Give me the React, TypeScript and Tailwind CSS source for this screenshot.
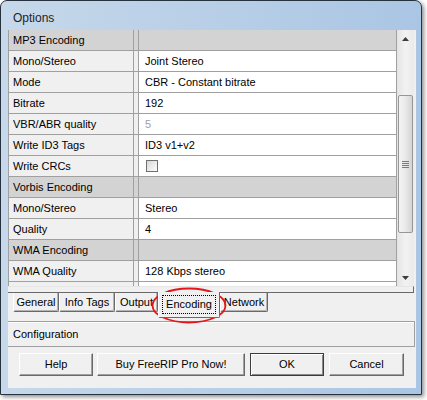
import React from "react";

type Row =
  | { kind: "header"; label: string }
  | { kind: "value"; label: string; value: string; muted?: boolean }
  | { kind: "check"; label: string };

const rows: Row[] = [
  { kind: "header", label: "MP3 Encoding" },
  { kind: "value", label: "Mono/Stereo", value: "Joint Stereo" },
  { kind: "value", label: "Mode", value: "CBR - Constant bitrate" },
  { kind: "value", label: "Bitrate", value: "192" },
  { kind: "value", label: "VBR/ABR quality", value: "5", muted: true },
  { kind: "value", label: "Write ID3 Tags", value: "ID3 v1+v2" },
  { kind: "check", label: "Write CRCs" },
  { kind: "header", label: "Vorbis Encoding" },
  { kind: "value", label: "Mono/Stereo", value: "Stereo" },
  { kind: "value", label: "Quality", value: "4" },
  { kind: "header", label: "WMA Encoding" },
  { kind: "value", label: "WMA Quality", value: "128 Kbps stereo" },
  { kind: "value", label: "", value: "" },
];

const tabs = [
  { label: "General", w: "w-[46px]" },
  { label: "Info Tags", w: "w-[56px]" },
  { label: "Output", w: "w-[43px]" },
  { label: "Encoding", w: "w-[62px]", active: true },
  { label: "Network", w: "w-[48px]" },
];

function GridRow({ row }: { row: Row }) {
  const header = row.kind === "header";
  return (
    <div className="flex h-[21px] shrink-0 border-b border-[#a0a0a0]">
      <div
        className={`w-[124px] flex items-center pl-[4px] ${
          header ? "bg-[#d3d3d3]" : "bg-[#f0f0f0]"
        }`}
      >
        {row.label}
      </div>
      <div
        className={`w-[6px] border-x border-[#a0a0a0] ${
          header ? "bg-[#d3d3d3]" : "bg-[#f0f0f0]"
        }`}
      />
      <div
        className={`flex-1 flex items-center pl-[6px] ${
          header ? "bg-[#d3d3d3]" : "bg-white"
        }`}
      >
        {row.kind === "value" && (
          <span className={row.muted ? "text-[#a0a0a0]" : ""}>{row.value}</span>
        )}
        {row.kind === "check" && (
          <span className="ml-[1px] w-[12px] h-[12px] border border-[#6f6f6f] bg-gradient-to-br from-[#d8d8d8] to-[#fdfdfd]" />
        )}
      </div>
    </div>
  );
}

function Arrow({ up }: { up?: boolean }) {
  return (
    <div className="h-[17px] flex items-center justify-center">
      <svg width="7" height="4" viewBox="0 0 7 4">
        {up ? (
          <polygon points="3.5,0 7,4 0,4" fill="#3c3c3c" />
        ) : (
          <polygon points="0,0 7,0 3.5,4" fill="#3c3c3c" />
        )}
      </svg>
    </div>
  );
}

function Scrollbar() {
  return (
    <div className="w-[17px] h-[256px] flex flex-col bg-gradient-to-r from-[#e4e4e4] via-[#f2f2f2] to-[#eaeaea]">
      <Arrow up />
      <div className="h-[48px]" />
      <div className="mx-[1px] h-[138px] rounded-[2px] border border-[#979797] bg-gradient-to-r from-[#f4f4f4] via-[#e9e9e9] to-[#d4d4d4] flex flex-col items-center justify-center gap-[1px]">
        <span className="w-[7px] h-[1px] bg-[#7c7c7c]" />
        <span className="w-[7px] h-[1px] bg-[#7c7c7c]" />
        <span className="w-[7px] h-[1px] bg-[#7c7c7c]" />
        <span className="w-[7px] h-[1px] bg-[#7c7c7c]" />
      </div>
      <div className="flex-1" />
      <Arrow />
    </div>
  );
}

function Button({
  label,
  w,
  primary,
}: {
  label: string;
  w: string;
  primary?: boolean;
}) {
  return (
    <div
      className={`${w} h-[23px] flex items-center justify-center bg-[#f0f0f0] border ${
        primary
          ? "border-[#3c3c3c] shadow-[inset_1px_1px_0_#fff,inset_-1px_-1px_0_#888]"
          : "border-t-white border-l-white border-r-[#696969] border-b-[#696969] shadow-[inset_-1px_-1px_0_#a0a0a0]"
      }`}
    >
      {label}
    </div>
  );
}

export default function App() {
  return (
    <div className="relative w-[427px] h-[400px] overflow-hidden bg-white text-[11px] text-black font-['Liberation_Sans',Arial,sans-serif]">
      <div className="w-[422px] h-[395px] flex flex-col rounded-t-[7px] border border-[#26333f] bg-[linear-gradient(to_right,#c6d8ea,#aac6e4)] shadow-[2px_2px_4px_rgba(0,0,0,0.45)]">
        <div className="h-[29px] shrink-0 flex items-center pl-[12px] pt-[5px] text-[12px] text-[#1e1e1e]">
          Options
        </div>
        <div className="ml-[7px] mr-[5px] h-[358px] flex flex-col bg-[#f0f0f0]">
          {/* property grid page */}
          <div className="h-[263px] shrink-0 flex flex-col">
            <div className="flex h-[256px]">
              <div className="w-[389px] h-[256px] overflow-hidden flex flex-col border-l border-r border-[#a0a0a0]">
                {rows.map((r, i) => (
                  <GridRow key={i} row={r} />
                ))}
              </div>
              <Scrollbar />
            </div>
            <div className="w-[406px] h-[7px] border-t border-b border-r border-t-[#e6e6e6] border-b-[#696969] border-r-[#696969] bg-[#f0f0f0]" />
          </div>

          {/* tabs */}
          <div className="h-[28px] shrink-0 flex items-start pl-[5px]">
            {tabs.map((t) =>
              t.active ? (
                <div
                  key={t.label}
                  className={`${t.w} relative z-10 -mt-[1px] h-[26px] bg-[#f0f0f0] border-l border-r border-b border-l-white border-r-[#696969] border-b-[#696969] rounded-b-[2px] p-[3px] pt-[3px]`}
                >
                  <div className="h-full border border-dotted border-black flex items-center justify-center">
                    {t.label}
                  </div>
                </div>
              ) : (
                <div
                  key={t.label}
                  className={`${t.w} h-[19px] flex items-center justify-center bg-[#f0f0f0] border-l border-r border-b border-l-white border-r-[#696969] border-b-[#696969] rounded-b-[2px] shadow-[inset_-1px_-1px_0_#b4b4b4]`}
                >
                  {t.label}
                </div>
              )
            )}
          </div>

          {/* configuration panel */}
          <div className="w-[407px] h-[26px] shrink-0 flex items-center pl-[5px] border-t border-b border-r border-t-[#a0a0a0] border-b-[#a0a0a0] border-r-[#a0a0a0] shadow-[inset_0_1px_0_#fff]">
            Configuration
          </div>

          {/* buttons */}
          <div className="mt-[6px] flex pl-[11px]">
            <Button label="Help" w="w-[74px]" />
            <div className="w-[4px]" />
            <Button label="Buy FreeRIP Pro Now!" w="w-[148px]" />
            <div className="w-[5px]" />
            <Button label="OK" w="w-[74px]" primary />
            <div className="w-[5px]" />
            <Button label="Cancel" w="w-[75px]" />
          </div>
        </div>
      </div>

      {/* red annotation around the Encoding tab */}
      <svg
        className="absolute left-[151px] top-[287px]"
        width="76"
        height="37"
        viewBox="0 0 76 37"
      >
        <ellipse cx="38" cy="18.5" rx="36.5" ry="17" fill="none" stroke="#e3161b" strokeWidth="1.8" />
      </svg>
    </div>
  );
}
